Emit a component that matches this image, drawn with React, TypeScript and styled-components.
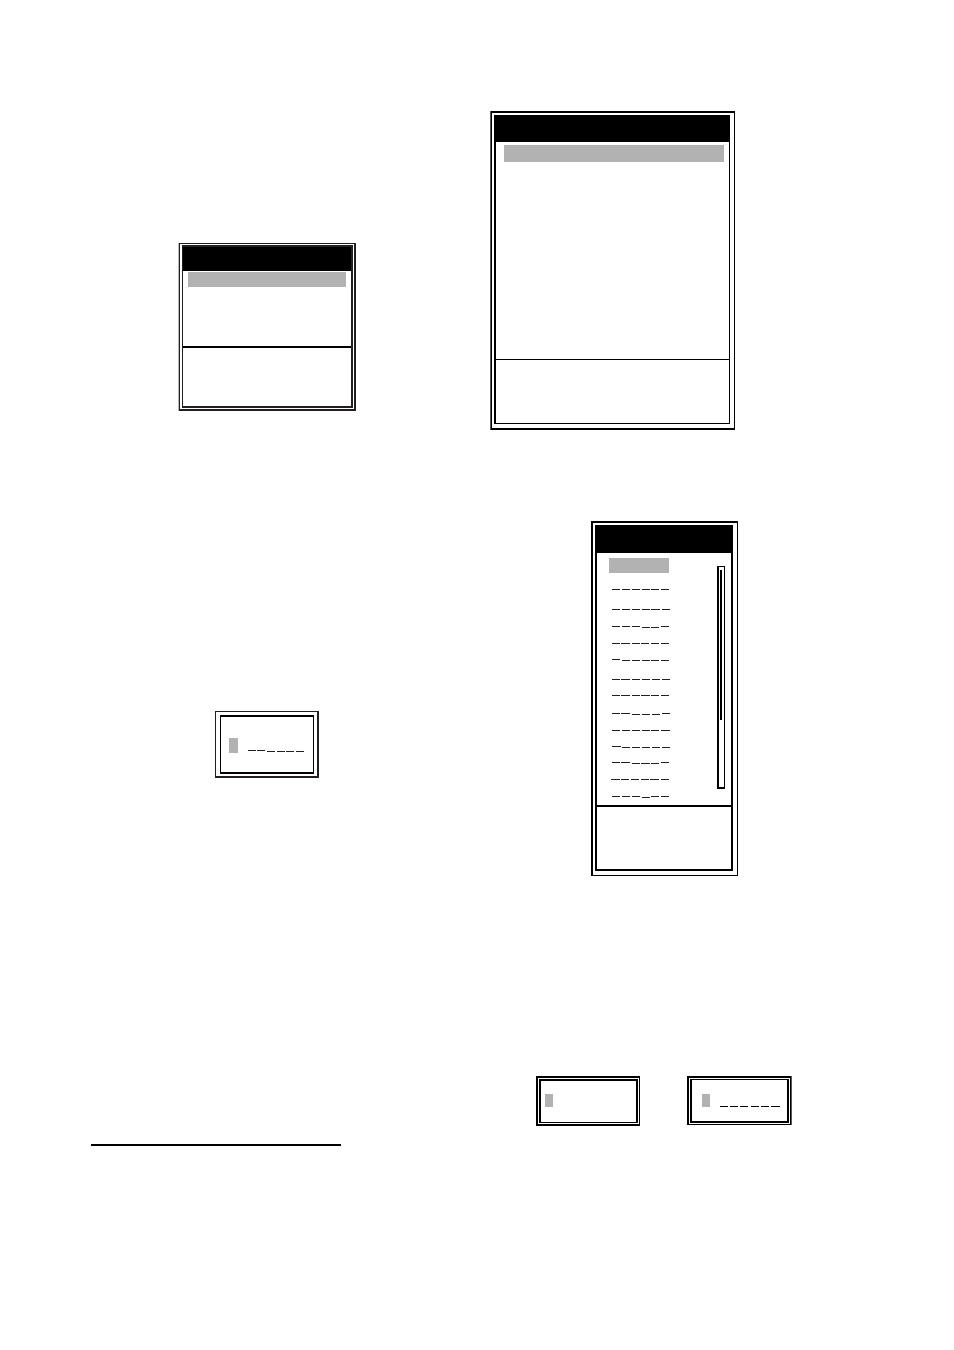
import React from "react";
import styled, { createGlobalStyle } from "styled-components";

const INK = "#231f20";
const MARK = "#b2b2b2";

const GlobalStyle = createGlobalStyle`
  * { box-sizing: border-box; }
  body {
    margin: 0;
    background: #ffffff;
    font-family: "Liberation Sans", Arial, sans-serif;
  }
`;

const Page = styled.main`
  display: grid;
  grid-template-columns: 1fr 1fr;
  column-gap: 26px;
  padding: 111px 91px 204px;
`;

const Column = styled.div`
  display: flex;
  flex-direction: column;
  align-items: flex-start;
`;

const Block = styled.div<{ $top?: number; $left?: number }>`
  display: flex;
  align-items: flex-start;
  gap: 47px;
  margin-top: ${(p) => p.$top ?? 0}px;
  margin-left: ${(p) => p.$left ?? 0}px;
`;

const Frame = styled.section<{
  $width: number;
  $lines: string;
  $inset: string;
  $color?: string;
  $edge?: string;
}>`
  width: ${(p) => p.$width}px;
  border: solid ${(p) => p.$color ?? "#000"};
  border-width: ${(p) => p.$lines};
  padding: ${(p) => p.$inset};
  box-shadow: ${(p) => p.$edge ?? "none"};
`;

const Screen = styled.div<{ $lines: string; $color?: string }>`
  border: solid ${(p) => p.$color ?? "#000"};
  border-width: ${(p) => p.$lines};
`;

const TitleBar = styled.header<{ $height: number }>`
  height: ${(p) => p.$height}px;
  background: #000;
`;

const Body = styled.div<{ $height: number; $pad: string }>`
  display: flex;
  align-items: flex-start;
  justify-content: space-between;
  min-height: ${(p) => p.$height}px;
  padding: ${(p) => p.$pad};
`;

const Footer = styled.footer<{ $height: number; $line: number }>`
  min-height: ${(p) => p.$height}px;
  border-top: ${(p) => p.$line}px solid #000;
`;

const Highlight = styled.div<{ $height: number }>`
  flex: 1;
  height: ${(p) => p.$height}px;
  background: ${MARK};
`;

const CodeList = styled.ul`
  list-style: none;
  margin: 0;
  padding: 0;
`;

const SelectedCode = styled.li`
  width: 60px;
  height: 15px;
  margin-bottom: 16px;
  background: ${MARK};
`;

const CodeRow = styled.li<{ $height: number }>`
  height: ${(p) => p.$height}px;
`;

const ScrollTrack = styled.div`
  width: 8px;
  height: 223px;
  margin-top: 8px;
  padding: 3px 0 0 1px;
  border: solid #000;
  border-width: 1px 1px 2px 2px;
`;

const ScrollThumb = styled.div`
  width: 2px;
  height: 150px;
  background: #000;
`;

const Entry = styled.div<{ $height: number; $pad: string }>`
  display: flex;
  align-items: flex-start;
  min-height: ${(p) => p.$height}px;
  padding: ${(p) => p.$pad};
`;

const EntryLine = styled.div`
  display: flex;
  align-items: flex-end;
  gap: 10px;
`;

const Cursor = styled.span<{ $width: number; $height: number }>`
  width: ${(p) => p.$width}px;
  height: ${(p) => p.$height}px;
  background: ${MARK};
`;

const DashArt = styled.svg`
  display: block;
`;

const Rule = styled.hr`
  width: 250px;
  height: 2px;
  margin: 366px 0 0;
  border: 0;
  background: #000;
`;

// Each dash is [start, length, drop].
type Dash = [number, number, number];

function Dashes({ dashes, color = INK }: { dashes: Dash[]; color?: string }) {
  return (
    <DashArt width={62} height={3} viewBox="0 0 62 3" shapeRendering="crispEdges" aria-hidden="true">
      {dashes.map(([x, w, y]) => (
        <rect key={x} x={x} y={y} width={w} height={1} fill={color} />
      ))}
    </DashArt>
  );
}

const codeRows: { height: number; dashes: Dash[] }[] = [
  { height: 20, dashes: [[3, 8, 0], [13, 8, 0], [23, 8, 0], [33, 8, 0], [42, 8, 0], [52, 8, 0]] },
  { height: 17, dashes: [[3, 8, 0], [13, 8, 0], [23, 8, 0], [33, 8, 0], [42, 9, 0], [53, 8, 0]] },
  { height: 17, dashes: [[3, 8, 0], [13, 8, 0], [23, 8, 0], [33, 8, 1], [42, 8, 1], [52, 8, 0]] },
  { height: 16, dashes: [[3, 8, 0], [12, 9, 0], [23, 8, 0], [32, 8, 0], [42, 8, 0], [52, 8, 0]] },
  { height: 20, dashes: [[3, 8, 0], [13, 8, 1], [23, 8, 1], [33, 8, 1], [42, 8, 1], [52, 8, 1]] },
  { height: 16, dashes: [[3, 8, 0], [12, 9, 0], [23, 8, 0], [33, 8, 0], [43, 8, 0], [53, 8, 0]] },
  { height: 18, dashes: [[3, 8, 0], [12, 9, 0], [23, 8, 0], [32, 9, 0], [42, 8, 0], [52, 8, 0]] },
  { height: 17, dashes: [[3, 8, 0], [12, 9, 0], [23, 8, 1], [33, 8, 1], [43, 8, 1], [53, 8, 0]] },
  { height: 16, dashes: [[3, 8, 0], [13, 8, 0], [23, 8, 0], [33, 8, 0], [42, 8, 0], [52, 9, 0]] },
  { height: 16, dashes: [[3, 9, 0], [13, 8, 1], [23, 8, 1], [33, 8, 1], [43, 8, 1], [53, 8, 1]] },
  { height: 17, dashes: [[3, 8, 0], [12, 9, 0], [23, 8, 1], [32, 9, 1], [42, 8, 1], [52, 8, 0]] },
  { height: 17, dashes: [[2, 9, 0], [12, 8, 0], [22, 8, 0], [32, 8, 0], [41, 9, 0], [52, 8, 0]] },
  { height: 3, dashes: [[3, 8, 0], [13, 8, 0], [23, 8, 0], [33, 8, 1], [42, 8, 0], [52, 8, 0]] },
];

const userCode: Dash[] = [[0, 8, 0], [9, 8, 0], [19, 8, 1], [29, 8, 1], [38, 8, 1], [48, 8, 1]];
const newCode: Dash[] = [[0, 8, 2], [10, 8, 2], [20, 8, 2], [31, 8, 2], [41, 8, 2], [51, 9, 2]];

export default function App() {
  return (
    <>
      <GlobalStyle />
      <Page>
        <Column>
          <Block $top={132} $left={88}>
            <Frame $width={177} $lines="1px 2px 2px 1px" $inset="1px 1px 1px 2px" $color={INK} $edge="-1px 0 0 #b8b8b8">
              <Screen $lines="2px 2px 2px 1px" $color={INK}>
                <TitleBar $height={24} />
                <Body $height={75} $pad="1px 5px 0">
                  <Highlight $height={15} />
                </Body>
                <Footer $height={60} $line={2} />
              </Screen>
            </Frame>
          </Block>

          <Block $top={300} $left={124}>
            <Frame $width={104} $lines="1px 2px 2px 1px" $inset="3px 3px 2px 4px" $color={INK}>
              <Screen $lines="2px 1px">
                <Entry $height={55} $pad="21px 0 0 8px">
                  <EntryLine>
                    <Cursor $width={9} $height={15} />
                    <Dashes dashes={userCode} />
                  </EntryLine>
                </Entry>
              </Screen>
            </Frame>
          </Block>

          <Rule />
        </Column>

        <Column>
          <Block $left={1}>
            <Frame $width={244} $lines="2px 1px 2px 1px" $inset="2px 4px 4px 2px" $edge="-1px 0 0 #585858">
              <Screen $lines="2px 1px 1px 2px">
                <TitleBar $height={25} />
                <Body $height={217} $pad="3px 5px 0 8px">
                  <Highlight $height={17} />
                </Body>
                <Footer $height={64} $line={1} />
              </Screen>
            </Frame>
          </Block>

          <Block $top={91} $left={101}>
            <Frame $width={147} $lines="2px 1px 1px 2px" $inset="2px 4px 4px 2px">
              <Screen $lines="2px">
                <TitleBar $height={26} />
                <Body $height={252} $pad="5px 6px 0 12px">
                  <CodeList>
                    <SelectedCode />
                    {codeRows.map((row, i) => (
                      <CodeRow key={i} $height={row.height}>
                        <Dashes dashes={row.dashes} />
                      </CodeRow>
                    ))}
                  </CodeList>
                  <ScrollTrack>
                    <ScrollThumb />
                  </ScrollTrack>
                </Body>
                <Footer $height={64} $line={2} />
              </Screen>
            </Frame>
          </Block>

          <Block $top={200} $left={46}>
            <Frame $width={104} $lines="2px 1px 2px 2px" $inset="1px">
              <Screen $lines="2px 2px 1px 2px">
                <Entry $height={41} $pad="13px 0 0 4px">
                  <Cursor $width={8} $height={13} />
                </Entry>
              </Screen>
            </Frame>
            <Frame $width={104} $lines="2px 1px 1px 2px" $inset="1px" $edge="1px 0 0 #585858">
              <Screen $lines="1px 2px 2px 2px">
                <Entry $height={41} $pad="14px 0 0 10px">
                  <EntryLine>
                    <Cursor $width={8} $height={13} />
                    <Dashes dashes={newCode} color="#000" />
                  </EntryLine>
                </Entry>
              </Screen>
            </Frame>
          </Block>
        </Column>
      </Page>
    </>
  );
}
